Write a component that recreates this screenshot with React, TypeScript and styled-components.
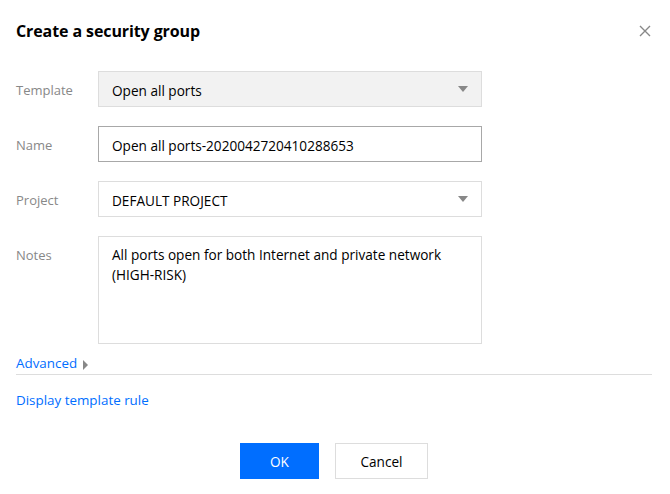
import React from 'react';
import styled, { createGlobalStyle } from 'styled-components';

const GlobalStyle = createGlobalStyle`
  html, body {
    margin: 0;
    padding: 0;
    background: #fff;
  }
  body {
    font-family: 'Open Sans', 'Noto Sans', sans-serif;
    color: #000;
  }
`;

const Dialog = styled.div`
  width: 670px;
  height: 494px;
  box-sizing: border-box;
  padding: 19px 18px 0 16px;
  display: flex;
  flex-direction: column;
`;

const Header = styled.div`
  display: flex;
  align-items: center;
  justify-content: space-between;
  height: 24px;
`;

const Title = styled.h2`
  margin: 0;
  font-size: 16px;
  font-weight: 700;
  color: #000;
  letter-spacing: -0.1px;
`;

const CloseButton = styled.button`
  border: none;
  background: none;
  padding: 0;
  width: 14px;
  height: 14px;
  display: flex;
  cursor: pointer;
`;

const Form = styled.div`
  margin-top: 28px;
  display: flex;
  flex-direction: column;
  gap: 19px;
`;

const Row = styled.div`
  display: flex;
  align-items: flex-start;
`;

const Label = styled.div`
  width: 82px;
  height: 36px;
  box-sizing: border-box;
  padding-top: 2px;
  flex-shrink: 0;
  font-size: 13px;
  color: #888;
  line-height: 34px;
`;

const Field = styled.div<{ $variant?: 'filled' | 'focus' | 'plain' }>`
  width: 384px;
  height: 36px;
  box-sizing: border-box;
  display: flex;
  align-items: center;
  justify-content: space-between;
  padding: 3px 13px 0 13px;
  font-size: 13.6px;
  color: #000;
  background: ${({ $variant }) => ($variant === 'filled' ? '#f2f2f2' : '#fff')};
  border: 1px solid ${({ $variant }) => ($variant === 'focus' ? '#a8a8a8' : '#dddddd')};
`;

const TextArea = styled.div`
  width: 384px;
  height: 108px;
  box-sizing: border-box;
  padding: 8px 13px;
  font-size: 13.6px;
  line-height: 20px;
  color: #000;
  border: 1px solid #dddddd;
`;

const Caret = styled.span`
  width: 0;
  height: 0;
  margin-top: -3px;
  border-left: 5px solid transparent;
  border-right: 5px solid transparent;
  border-top: 6px solid #888;
`;

const AdvancedBar = styled.div`
  margin-top: 10px;
  display: flex;
  align-items: center;
  gap: 6px;
  padding-bottom: 2px;
  border-bottom: 1px solid #dddddd;
`;

const Link = styled.a`
  font-size: 13.4px;
  color: #006eff;
  text-decoration: none;
  cursor: pointer;
`;

const SideCaret = styled.span`
  width: 0;
  height: 0;
  margin-top: 3px;
  border-top: 5px solid transparent;
  border-bottom: 5px solid transparent;
  border-left: 5px solid #888;
`;

const TemplateLink = styled(Link)`
  margin-top: 16px;
`;

const Footer = styled.div`
  margin-top: 34px;
  display: flex;
  justify-content: center;
  gap: 16px;
`;

const Button = styled.button<{ $primary?: boolean }>`
  height: 36px;
  min-width: ${({ $primary }) => ($primary ? '79px' : '93px')};
  box-sizing: border-box;
  font-family: inherit;
  font-size: 13.6px;
  cursor: pointer;
  color: ${({ $primary }) => ($primary ? '#fff' : '#000')};
  background: ${({ $primary }) => ($primary ? '#006eff' : '#fff')};
  border: 1px solid ${({ $primary }) => ($primary ? '#006eff' : '#dddddd')};
`;

export default function App() {
  return (
    <>
      <GlobalStyle />
      <Dialog>
        <Header>
          <Title>Create a security group</Title>
          <CloseButton aria-label="Close">
            <svg width="14" height="14" viewBox="0 0 14 14">
              <path d="M2 2 L12 12 M12 2 L2 12" stroke="#888" strokeWidth="1.4" fill="none" />
            </svg>
          </CloseButton>
        </Header>
        <Form>
          <Row>
            <Label>Template</Label>
            <Field $variant="filled">
              Open all ports
              <Caret />
            </Field>
          </Row>
          <Row>
            <Label>Name</Label>
            <Field $variant="focus">Open all ports-2020042720410288653</Field>
          </Row>
          <Row>
            <Label>Project</Label>
            <Field>
              DEFAULT PROJECT
              <Caret />
            </Field>
          </Row>
          <Row>
            <Label>Notes</Label>
            <TextArea>
              All ports open for both Internet and private network
              <br />
              (HIGH-RISK)
            </TextArea>
          </Row>
        </Form>
        <AdvancedBar>
          <Link>Advanced</Link>
          <SideCaret />
        </AdvancedBar>
        <TemplateLink>Display template rule</TemplateLink>
        <Footer>
          <Button $primary>OK</Button>
          <Button>Cancel</Button>
        </Footer>
      </Dialog>
    </>
  );
}
